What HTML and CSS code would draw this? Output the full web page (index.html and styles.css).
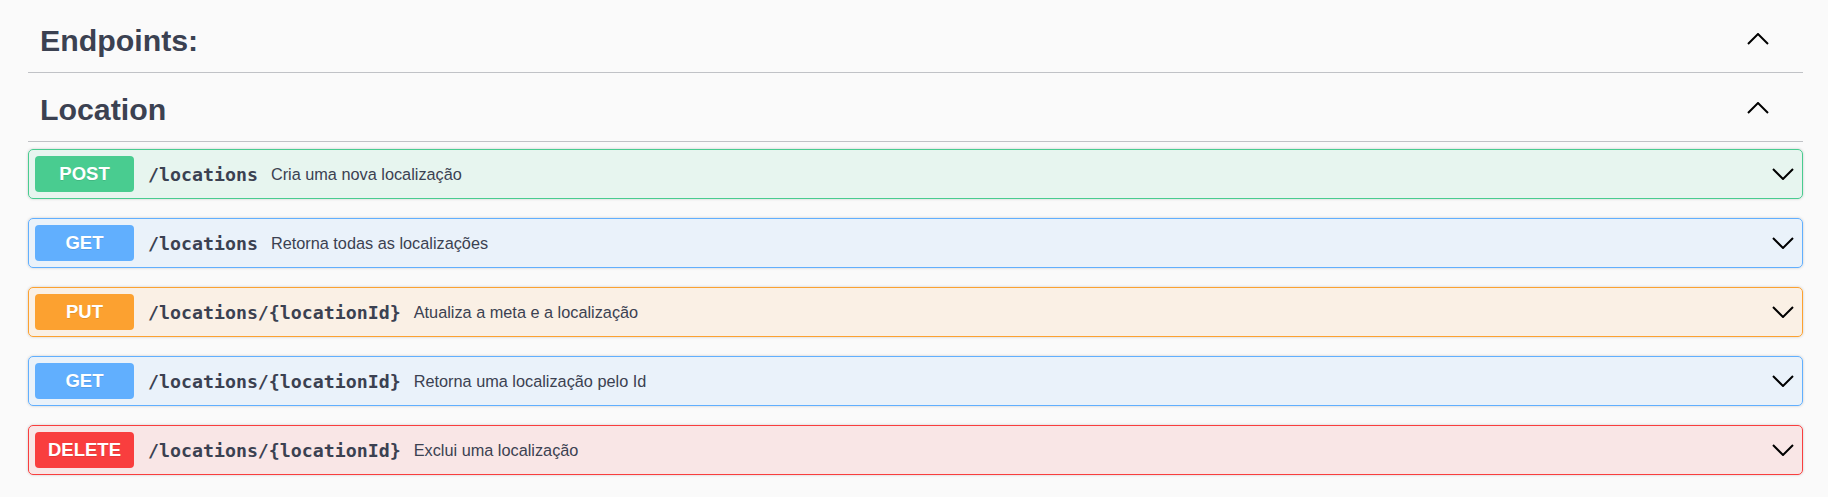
FILE: index.html
```html
<!DOCTYPE html>
<html lang="pt">
<head>
<meta charset="utf-8">
<title>Endpoints</title>
<link rel="stylesheet" href="styles.css">
</head>
<body>
<div class="wrap">
  <div class="tag-header">
    <h3 class="tag-title">Endpoints:</h3>
    <svg class="chev chev-up" viewBox="0 0 22 12" width="22" height="12"><polyline points="1,11 11,1 21,11"/></svg>
  </div>
  <div class="tag-header">
    <h3 class="tag-title">Location</h3>
    <svg class="chev chev-up" viewBox="0 0 22 12" width="22" height="12"><polyline points="1,11 11,1 21,11"/></svg>
  </div>
  <div class="ops">
    <div class="op op-post">
      <span class="method">POST</span>
      <span class="path">/locations</span>
      <span class="desc">Cria uma nova localização</span>
      <svg class="chev" viewBox="0 0 22 12" width="22" height="12"><polyline points="1,1 11,11 21,1"/></svg>
    </div>
    <div class="op op-get">
      <span class="method">GET</span>
      <span class="path">/locations</span>
      <span class="desc">Retorna todas as localizações</span>
      <svg class="chev" viewBox="0 0 22 12" width="22" height="12"><polyline points="1,1 11,11 21,1"/></svg>
    </div>
    <div class="op op-put">
      <span class="method">PUT</span>
      <span class="path">/locations/{locationId}</span>
      <span class="desc">Atualiza a meta e a localização</span>
      <svg class="chev" viewBox="0 0 22 12" width="22" height="12"><polyline points="1,1 11,11 21,1"/></svg>
    </div>
    <div class="op op-get">
      <span class="method">GET</span>
      <span class="path">/locations/{locationId}</span>
      <span class="desc">Retorna uma localização pelo Id</span>
      <svg class="chev" viewBox="0 0 22 12" width="22" height="12"><polyline points="1,1 11,11 21,1"/></svg>
    </div>
    <div class="op op-delete">
      <span class="method">DELETE</span>
      <span class="path">/locations/{locationId}</span>
      <span class="desc">Exclui uma localização</span>
      <svg class="chev" viewBox="0 0 22 12" width="22" height="12"><polyline points="1,1 11,11 21,1"/></svg>
    </div>
  </div>
</div>
</body>
</html>
```

FILE: styles.css
```css
html, body {
  margin: 0;
  padding: 0;
  background: #fafafa;
}

body {
  font-family: "Liberation Sans", Arial, sans-serif;
  color: #3b4151;
}

.wrap {
  padding: 4px 25px 0 28px;
}

.tag-header {
  display: flex;
  align-items: center;
  padding: 17px 34px 11px 12px;
  border-bottom: 1px solid rgba(59, 65, 81, 0.3);
}

.tag-title {
  flex: 1;
  margin: 0;
  font-size: 30.3px;
  line-height: 40px;
  font-weight: 700;
  color: #3b4151;
}

.chev {
  display: block;
  flex: none;
  fill: none;
  stroke: #000;
  stroke-width: 2;
}

.chev-up {
  margin-bottom: 4px;
}

.ops {
  padding-top: 7px;
}

.op {
  display: flex;
  align-items: center;
  box-sizing: border-box;
  height: 50px;
  margin-bottom: 19px;
  padding: 0 8px 0 6px;
  border: 1px solid;
  border-radius: 5px;
  box-shadow: 0 0 3px rgba(0, 0, 0, 0.19);
}

.method {
  flex: none;
  display: flex;
  align-items: center;
  justify-content: center;
  width: 99px;
  height: 36px;
  border-radius: 4px;
  font-size: 18.5px;
  font-weight: 700;
  color: #fff;
  text-shadow: 0 1px 0 rgba(0, 0, 0, 0.1);
}

.path {
  flex: none;
  margin-left: 14px;
  font-family: "DejaVu Sans Mono", monospace;
  font-size: 18.25px;
  font-weight: 700;
  color: #3b4151;
}

.desc {
  flex: 1;
  margin-left: 13px;
  font-size: 16.3px;
  color: #3b4151;
}

.op-post {
  border-color: #49cc90;
  background: rgba(73, 204, 144, 0.1);
}
.op-post .method { background: #49cc90; }

.op-get {
  border-color: #61affe;
  background: rgba(97, 175, 254, 0.1);
}
.op-get .method { background: #61affe; }

.op-put {
  border-color: #fca130;
  background: rgba(252, 161, 48, 0.1);
}
.op-put .method { background: #fca130; }

.op-delete {
  border-color: #f93e3e;
  background: rgba(249, 62, 62, 0.1);
}
.op-delete .method { background: #f93e3e; }
```
